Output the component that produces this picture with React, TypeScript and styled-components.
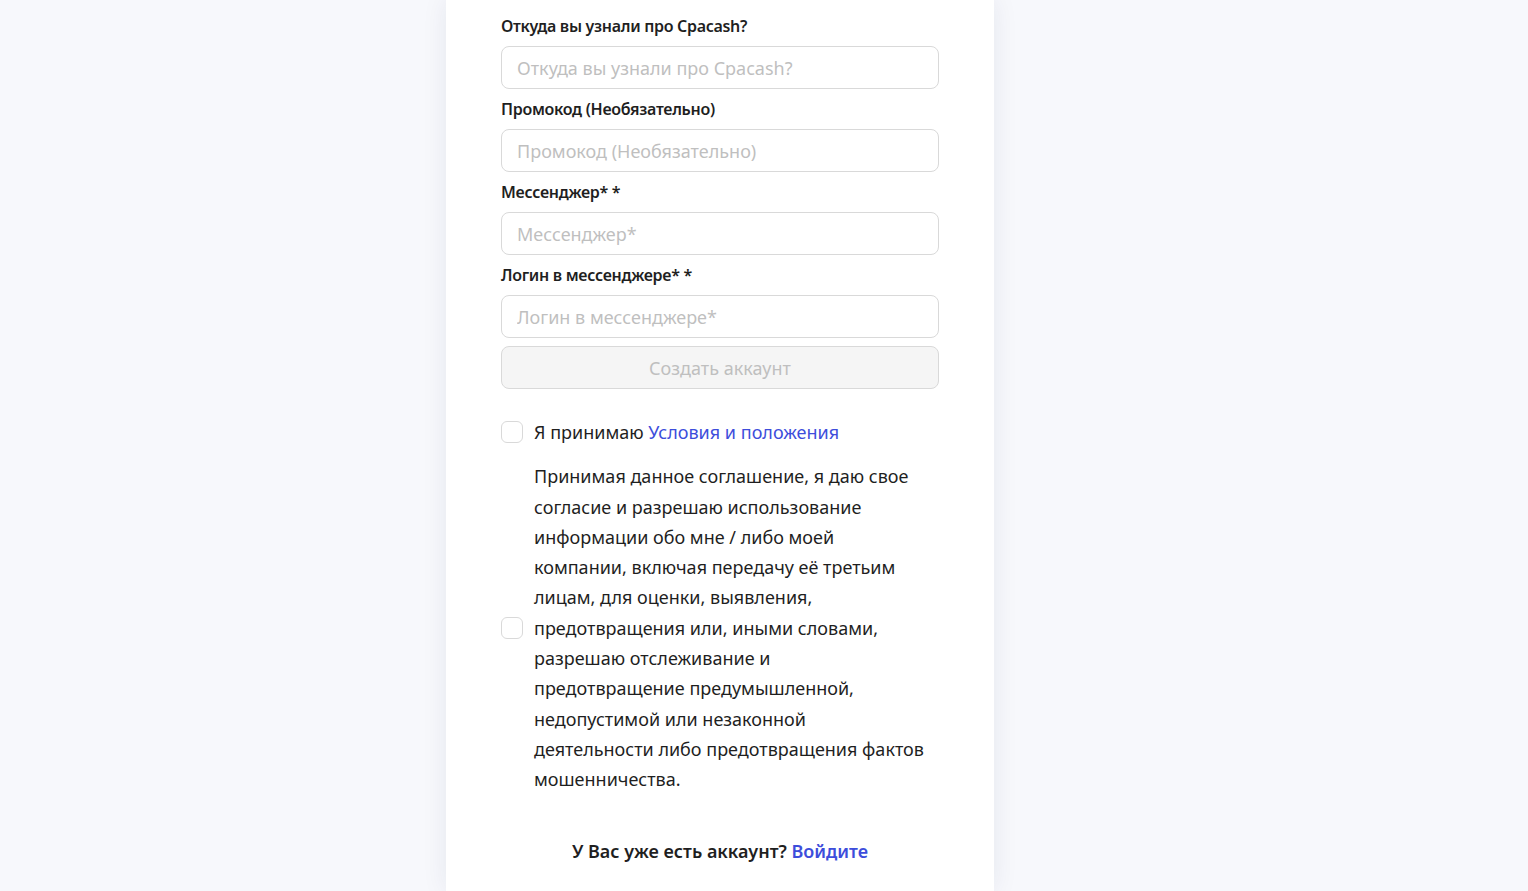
import React, { useState } from 'react';
import styled, { createGlobalStyle } from 'styled-components';

const GlobalStyle = createGlobalStyle`
  html, body {
    margin: 0;
    padding: 0;
    background: #f7f8fc;
    height: 100%;
    overflow: hidden;
  }
  body {
    font-family: "Noto Sans", "Open Sans", sans-serif;
    color: #1f1f1f;
  }
  * { box-sizing: border-box; }
`;

const Page = styled.div`
  width: 100%;
  height: 891px;
  display: flex;
  justify-content: center;
  padding-right: 88px;
  background: #f7f8fc;
`;

const Card = styled.div`
  width: 548px;
  height: 100%;
  background: #ffffff;
  box-shadow: 0 0 24px rgba(30, 40, 80, 0.08);
  padding: 14px 55px 0;
  display: flex;
  flex-direction: column;
`;

const Field = styled.div`
  display: flex;
  flex-direction: column;
  gap: 8px;
  margin-bottom: 8px;
`;

const Label = styled.label`
  font-size: 16px;
  font-weight: 600;
  line-height: 24px;
  letter-spacing: -0.3px;
  color: #1f1f1f;
`;

const Input = styled.input`
  height: 43px;
  width: 100%;
  border: 1px solid #d9d9d9;
  border-radius: 8px;
  padding: 0 15px;
  font-family: inherit;
  font-size: 18px;
  color: #1f1f1f;
  outline: none;
  background: #fff;

  &::placeholder {
    color: #bfbfbf;
  }
`;

const SubmitButton = styled.button`
  height: 43px;
  width: 100%;
  border: 1px solid #d9d9d9;
  border-radius: 8px;
  background: #f5f5f5;
  color: #bfbfbf;
  font-family: inherit;
  font-size: 18px;
  cursor: not-allowed;
`;

const CheckRow = styled.label<{ $top: number }>`
  display: flex;
  align-items: center;
  gap: 11px;
  margin-top: ${(p) => p.$top}px;
  font-size: 18px;
  line-height: 30.3px;
  color: #1f1f1f;
  cursor: pointer;
`;

const Box = styled.span<{ $checked: boolean }>`
  flex: none;
  width: 22px;
  height: 22px;
  border: 1px solid #d9d9d9;
  border-radius: 6px;
  background: ${(p) => (p.$checked ? '#3d4ddb' : '#fff')};
  display: flex;
  align-items: center;
  justify-content: center;
`;

const CheckText = styled.span`
  flex: 1;
  white-space: nowrap;
`;

const Link = styled.a`
  color: #3d4ddb;
  text-decoration: none;
`;

const Footer = styled.div`
  margin-top: 42px;
  text-align: center;
  font-size: 18px;
  font-weight: 600;
  line-height: 28px;
  color: #1f1f1f;
`;

const fields = [
  'Откуда вы узнали про Cpacash?',
  'Промокод (Необязательно)',
  'Мессенджер* *',
  'Логин в мессенджере* *',
];

const placeholders = [
  'Откуда вы узнали про Cpacash?',
  'Промокод (Необязательно)',
  'Мессенджер*',
  'Логин в мессенджере*',
];

const consentLines = [
  'Принимая данное соглашение, я даю свое',
  'согласие и разрешаю использование',
  'информации обо мне / либо моей',
  'компании, включая передачу её третьим',
  'лицам, для оценки, выявления,',
  'предотвращения или, иными словами,',
  'разрешаю отслеживание и',
  'предотвращение предумышленной,',
  'недопустимой или незаконной',
  'деятельности либо предотвращения фактов',
  'мошенничества.',
];

function Check({ checked, onToggle }: { checked: boolean; onToggle: () => void }) {
  return (
    <Box $checked={checked} onClick={onToggle}>
      {checked && (
        <svg width="12" height="10" viewBox="0 0 12 10">
          <path d="M1 5l3.5 3.5L11 1.5" stroke="#fff" strokeWidth="2" fill="none" />
        </svg>
      )}
    </Box>
  );
}

export default function App() {
  const [terms, setTerms] = useState(false);
  const [consent, setConsent] = useState(false);

  return (
    <Page>
      <GlobalStyle />
      <Card>
        {fields.map((label, i) => (
          <Field key={label}>
            <Label>{label}</Label>
            <Input placeholder={placeholders[i]} />
          </Field>
        ))}
        <SubmitButton disabled>Создать аккаунт</SubmitButton>

        <CheckRow $top={28}>
          <Check checked={terms} onToggle={() => setTerms(!terms)} />
          <CheckText>
            Я принимаю <Link href="#">Условия и положения</Link>
          </CheckText>
        </CheckRow>

        <CheckRow $top={14}>
          <Check checked={consent} onToggle={() => setConsent(!consent)} />
          <CheckText>
            {consentLines.map((line, i) => (
              <React.Fragment key={i}>
                {line}
                {i < consentLines.length - 1 && <br />}
              </React.Fragment>
            ))}
          </CheckText>
        </CheckRow>

        <Footer>
          У Вас уже есть аккаунт? <Link href="#">Войдите</Link>
        </Footer>
      </Card>
    </Page>
  );
}
